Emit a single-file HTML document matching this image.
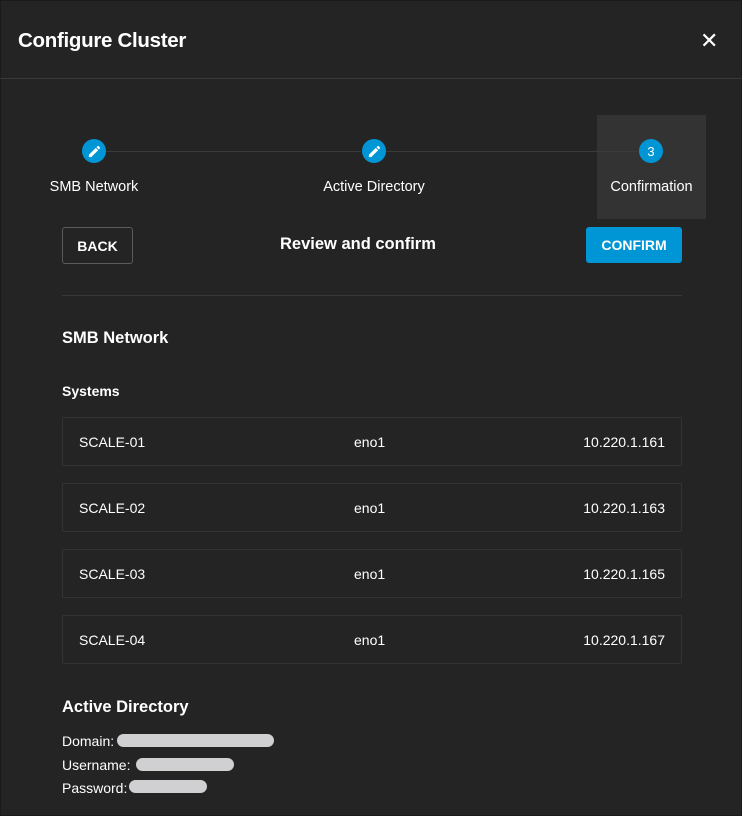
<!DOCTYPE html>
<html><head><meta charset="utf-8"><style>
*{margin:0;padding:0;box-sizing:border-box}
html,body{width:742px;height:816px;background:#242424;overflow:hidden;font-family:"Liberation Sans",sans-serif;color:#fff}
.frame{position:absolute;left:0;top:0;width:742px;height:816px;border:1px solid #1a1a1a}
.title{position:absolute;left:18px;top:29px;font-size:20.5px;font-weight:bold;letter-spacing:-0.3px}
.close{position:absolute;left:700px;top:28px;font-size:22px}
.hr{position:absolute;left:0;top:78px;width:742px;height:1px;background:#383838}
.line{position:absolute;top:151px;height:1px;background:#3a3a3a}
.circ{position:absolute;top:139px;width:24px;height:24px;border-radius:50%;background:#0095d5;display:flex;align-items:center;justify-content:center;font-size:13px}
.lbl{position:absolute;top:179px;font-size:14.5px;text-align:center;white-space:nowrap}
.sel{position:absolute;left:597px;top:115px;width:109px;height:104px;background:#333}
.btn{position:absolute;top:227px;height:37px;font-size:14px;font-weight:bold;display:flex;align-items:center;justify-content:center;border-radius:3px}
.row{position:absolute;left:62px;width:620px;height:49px;border:1px solid #333;border-radius:2px;font-size:14px}
.row span{position:absolute;top:16px}
.h{position:absolute;font-weight:bold}
.t{position:absolute;left:62px;font-size:14px}
.blur{position:absolute;height:13px;border-radius:7px;background:#d0d0d2}
</style></head><body>
<div class="frame"></div>
<div class="title">Configure Cluster</div>
<div class="close">✕</div>
<div class="hr"></div>
<div class="sel"></div>
<div class="line" style="left:106px;width:255px"></div>
<div class="line" style="left:386px;width:253px"></div>
<div class="circ" style="left:82px"><svg width="15" height="15" viewBox="0 0 24 24"><path fill="#fff" d="M3 17.25V21h3.75L17.81 9.94l-3.75-3.75L3 17.25zM20.71 7.04a1 1 0 000-1.41l-2.34-2.34a1 1 0 00-1.41 0l-1.83 1.83 3.75 3.75 1.83-1.83z"/></svg></div>
<div class="circ" style="left:362px"><svg width="15" height="15" viewBox="0 0 24 24"><path fill="#fff" d="M3 17.25V21h3.75L17.81 9.94l-3.75-3.75L3 17.25zM20.71 7.04a1 1 0 000-1.41l-2.34-2.34a1 1 0 00-1.41 0l-1.83 1.83 3.75 3.75 1.83-1.83z"/></svg></div>
<div class="circ" style="left:639px">3</div>
<div class="lbl" style="left:34px;width:120px">SMB Network</div>
<div class="lbl" style="left:304px;width:140px">Active Directory</div>
<div class="lbl" style="left:597px;width:109px">Confirmation</div>
<div class="btn" style="left:62px;width:71px;border:1px solid #5a5a5a">BACK</div>
<div class="h" style="left:280px;top:235px;font-size:16.5px">Review and confirm</div>
<div class="btn" style="left:586px;width:96px;background:#0095d5;top:227px;height:36px">CONFIRM</div>
<div style="position:absolute;left:62px;top:295px;width:620px;height:1px;background:#383838"></div>
<div class="h" style="left:62px;top:329px;font-size:16.5px">SMB Network</div>
<div class="h" style="left:62px;top:383px;font-size:14px">Systems</div>
<div class="row" style="top:417px"><span style="left:16px">SCALE-01</span><span style="left:291px">eno1</span><span style="right:16px">10.220.1.161</span></div>
<div class="row" style="top:483px"><span style="left:16px">SCALE-02</span><span style="left:291px">eno1</span><span style="right:16px">10.220.1.163</span></div>
<div class="row" style="top:549px"><span style="left:16px">SCALE-03</span><span style="left:291px">eno1</span><span style="right:16px">10.220.1.165</span></div>
<div class="row" style="top:615px"><span style="left:16px">SCALE-04</span><span style="left:291px">eno1</span><span style="right:16px">10.220.1.167</span></div>
<div class="h" style="left:62px;top:698px;font-size:16.5px">Active Directory</div>
<div class="t" style="top:733px">Domain:</div>
<div class="t" style="top:757px">Username:</div>
<div class="t" style="top:780px">Password:</div>
<div class="blur" style="left:117px;top:734px;width:157px"></div>
<div class="blur" style="left:136px;top:758px;width:98px"></div>
<div class="blur" style="left:129px;top:780px;width:78px"></div>
</body></html>
